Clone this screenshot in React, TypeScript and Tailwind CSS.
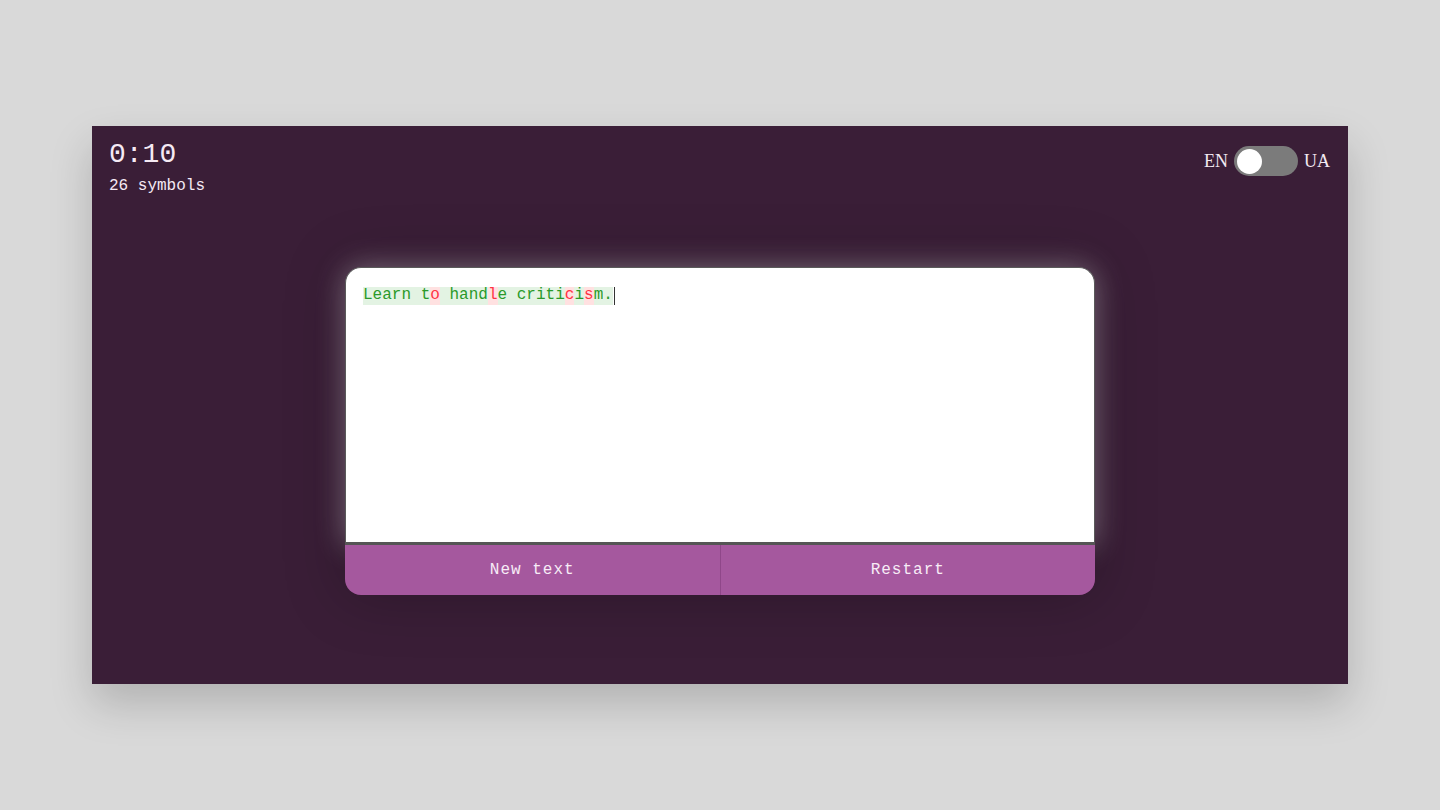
import React from 'react';

const mono = { fontFamily: '"Liberation Mono", "Courier New", monospace' };
const serif = { fontFamily: '"Liberation Serif", "Times New Roman", serif' };

const typed = 'Learn to handle criticism.';
const wrong = new Set([7, 13, 21, 23]);

const Toggle: React.FC = () => (
  <div className="flex items-center gap-[6px] text-[18px] text-[#f3e9f2]" style={serif}>
    <span>EN</span>
    <div className="flex h-[30px] w-[64px] items-center rounded-full bg-[#7b7b7b] px-[3px]">
      <div className="h-[25px] w-[25px] rounded-full bg-white" />
    </div>
    <span>UA</span>
  </div>
);

export default function App() {
  return (
    <div className="min-h-[810px] w-full bg-[#d9d9d9] pt-[126px]">
      <div className="mx-auto flex h-[558px] w-[1256px] flex-col bg-[#3a1e37] px-[17px] pt-[12px] shadow-[0_20px_40px_rgba(0,0,0,0.18)]" style={mono}>
        <div className="flex items-start justify-between">
          <div className="text-[#f5eaf4]">
            <div className="text-[28px] leading-[34px]">0:10</div>
            <div className="mt-[4px] text-[16px] leading-[20px]">26 symbols</div>
          </div>
          <div className="mr-[1px] mt-[8px]">
            <Toggle />
          </div>
        </div>

        <div className="mt-[71px] flex justify-center">
          <div className="w-[750px] rounded-[16px] shadow-[0_0_60px_rgba(0,0,0,0.25)]">
            <div className="h-[278px] rounded-t-[16px] border border-b-[3px] border-[#5a5a5a] border-b-[#555] bg-white px-[17px] pt-[19px] shadow-[0_0_30px_rgba(255,255,255,0.35)]">
              <div className="flex text-[16px] leading-[17px]" style={mono}>
                {typed.split('').map((ch, i) => (
                  <span
                    key={i}
                    className={
                      wrong.has(i)
                        ? 'whitespace-pre bg-[#ffe1e1] text-[#ff3344]'
                        : 'whitespace-pre bg-[#e3f3e3] text-[#2a9a2a]'
                    }
                  >
                    {ch}
                  </span>
                ))}
                <span className="ml-[1px] h-[18px] w-[1px] bg-[#333]" />
              </div>
            </div>
            <div className="flex h-[50px] overflow-hidden rounded-b-[16px] bg-[#a5589e] text-[16px] tracking-[1px] text-[#f7ecf6]">
              <button className="flex flex-1 items-center justify-center border-r border-[#8f4789]" style={mono}>
                New text
              </button>
              <button className="flex flex-1 items-center justify-center" style={mono}>
                Restart
              </button>
            </div>
          </div>
        </div>
      </div>
    </div>
  );
}
